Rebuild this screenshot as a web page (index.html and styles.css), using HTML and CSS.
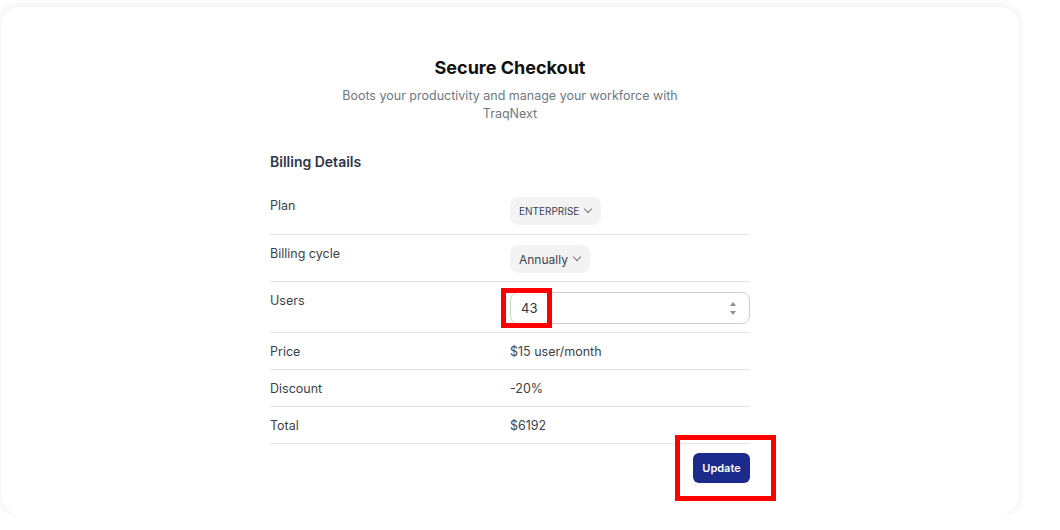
FILE: index.html
```html
<!DOCTYPE html>
<html lang="en">

<head>
    <meta charset="UTF-8">
    <meta name="viewport" content="width=device-width, initial-scale=1.0">
    <title>Secure Checkout</title>
    <link rel="stylesheet" href="styles.css">
</head>

<body>
    <div class="card">
        <div class="checkout">
            <h1>Secure Checkout</h1>
            <p class="subtitle">Boots your productivity and manage your workforce with TraqNext</p>

            <h2>Billing Details</h2>

            <div class="billing">
                <div class="row">
                    <div class="label">Plan</div>
                    <div class="value">
                        <button class="pill pill-caps">ENTERPRISE <span class="chevron"></span></button>
                    </div>
                </div>
                <div class="row">
                    <div class="label">Billing cycle</div>
                    <div class="value">
                        <button class="pill">Annually <span class="chevron"></span></button>
                    </div>
                </div>
                <div class="row">
                    <div class="label">Users</div>
                    <div class="value">
                        <div class="number-box">
                            <input type="text" value="43">
                            <span class="spin">
                                <span class="spin-up"></span>
                                <span class="spin-down"></span>
                            </span>
                            <span class="mark mark-users"></span>
                        </div>
                    </div>
                </div>
                <div class="row">
                    <div class="label">Price</div>
                    <div class="value">$15 user/month</div>
                </div>
                <div class="row">
                    <div class="label">Discount</div>
                    <div class="value">-20%</div>
                </div>
                <div class="row">
                    <div class="label">Total</div>
                    <div class="value">$6192</div>
                </div>
            </div>

            <div class="actions">
                <button class="update">Update</button>
                <span class="mark mark-update"></span>
            </div>
        </div>
    </div>
</body>

</html>
```

FILE: styles.css
```css
/* General Styles */
body {
    font-family: Inter, "Open Sans", Arial, sans-serif;
    background-color: #fff;
    margin: 0;
    padding: 7px 41px 0 1px;
}

.card {
    background-color: #fff;
    border-radius: 18px;
    box-shadow: 0 0 10px rgba(0, 0, 0, 0.09);
    height: 507px;
    box-sizing: border-box;
    padding-top: 49px;
}

.checkout {
    width: 480px;
    margin: 0 auto;
}

h1 {
    text-align: center;
    font-size: 18px;
    font-weight: 700;
    color: #111;
    margin: 0 0 7px;
    line-height: 24px;
}

.subtitle {
    text-align: center;
    font-size: 12.5px;
    line-height: 18px;
    color: #707784;
    width: 350px;
    margin: 0 auto;
}

h2 {
    font-size: 14px;
    font-weight: 600;
    color: #2d3648;
    margin: 29px 0 17px;
    line-height: 20px;
}

/* Billing rows */
.row {
    display: grid;
    grid-template-columns: 1fr 1fr;
    padding: 10px 0 8px;
    border-bottom: 1px solid #e3e3e3;
    font-size: 12.5px;
    line-height: 18px;
    color: #3b3f4c;
}

.row:first-child {
    padding: 8px 0 9px;
}

.pill {
    font-family: inherit;
    display: inline-flex;
    align-items: center;
    gap: 6px;
    height: 28px;
    padding: 0 10px 0 9px;
    border: none;
    border-radius: 8px;
    background-color: #f3f3f3;
    color: #3b3f55;
    font-size: 12px;
}

.pill-caps {
    font-size: 10px;
}

.chevron {
    width: 5px;
    height: 5px;
    border-right: 1.2px solid #777;
    border-bottom: 1.2px solid #777;
    transform: rotate(45deg);
    margin-top: -4px;
}

.number-box {
    position: relative;
    display: flex;
    align-items: center;
    height: 32px;
    box-sizing: border-box;
    border: 1px solid #cfcfcf;
    border-radius: 8px;
    padding: 0 10px;
}

.number-box input {
    flex: 1;
    border: none;
    outline: none;
    font-family: inherit;
    font-size: 13px;
    color: #333;
    padding: 0;
    width: 100%;
}

.spin {
    display: flex;
    flex-direction: column;
    gap: 5px;
    margin-right: 3px;
}

.spin-up,
.spin-down {
    width: 0;
    height: 0;
    border-left: 3.5px solid transparent;
    border-right: 3.5px solid transparent;
}

.spin-up {
    border-bottom: 4px solid #8f8f8f;
}

.spin-down {
    border-top: 4px solid #8f8f8f;
}

/* Update button */
.actions {
    position: relative;
    display: flex;
    justify-content: flex-end;
    padding-top: 9px;
}

.update {
    font-family: inherit;
    background-color: #1c2a8c;
    color: #fff;
    border: none;
    border-radius: 6px;
    font-size: 11px;
    font-weight: 600;
    width: 57px;
    height: 30px;
    cursor: pointer;
}

/* Red highlight marks */
.mark {
    position: absolute;
    border: 5px solid #ff0000;
    box-sizing: border-box;
}

.mark-users {
    left: -10px;
    top: -5px;
    width: 51px;
    height: 40px;
}

.mark-update {
    right: -26px;
    top: -9px;
    width: 101px;
    height: 66px;
}
```
